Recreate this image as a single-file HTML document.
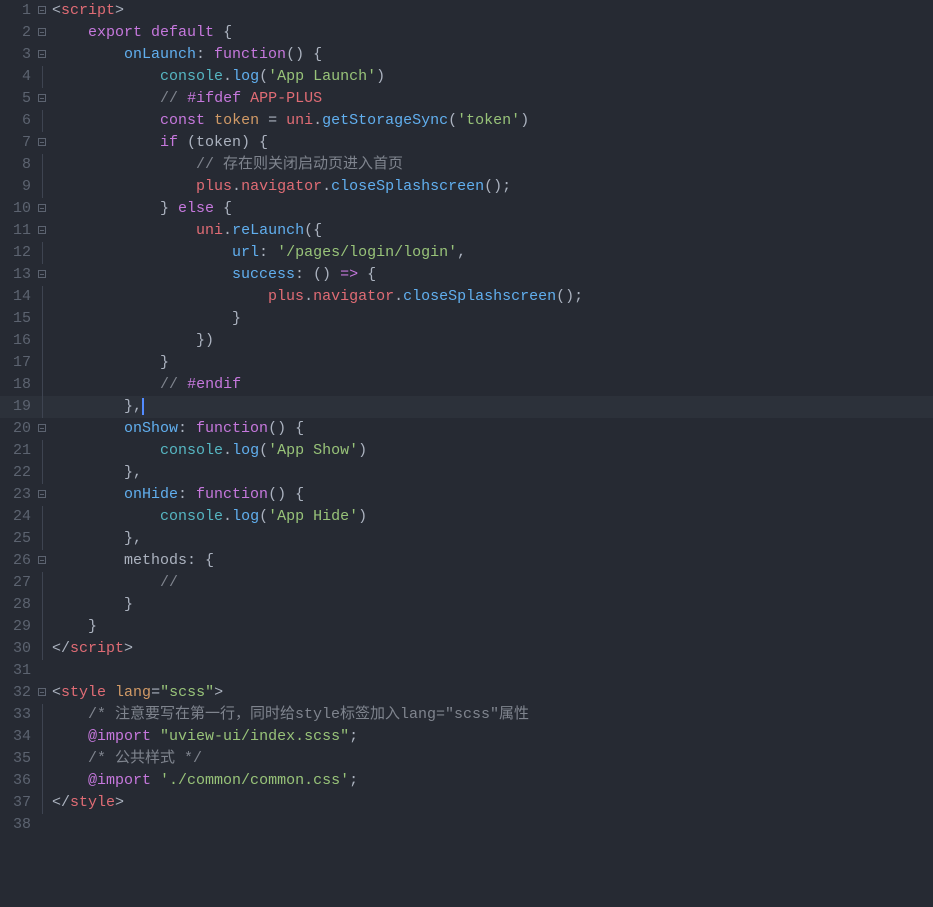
<!DOCTYPE html><html><head><meta charset="utf-8"><style>
body{margin:0;background:#262a33;width:933px;height:907px;overflow:hidden;font-family:"Liberation Mono","Noto Sans CJK SC",monospace;font-size:15px;color:#abb2bf}
.l{position:relative;height:22px;line-height:22px;white-space:pre}
.n{position:absolute;left:0;width:31px;text-align:right;color:#5c6370}
.f{position:absolute;left:38px;top:6px;width:8px;height:8px;border:1px solid #5c6370;box-sizing:border-box}
.f:after{content:"";position:absolute;left:1px;top:3px;width:4px;height:1px;background:#5c6370}
.v{position:absolute;left:42px;top:0;width:1px;height:22px;background:#3e4451}
.c{position:absolute;left:52px}
.cur{background:#2c313a}
.r{color:#e06c75}.p{color:#c678dd}.b{color:#61afef}.y{color:#56b6c2}.g{color:#98c379}.m{color:#7f848e}.o{color:#d19a66}
</style></head><body>
<div class="l"><span class="n">1</span><i class="f"></i><span class="c">&lt;<span class="r">script</span>&gt;</span></div>
<div class="l"><span class="n">2</span><i class="f"></i><span class="c">    <span class="p">export</span> <span class="p">default</span> {</span></div>
<div class="l"><span class="n">3</span><i class="f"></i><span class="c">        <span class="b">onLaunch</span>: <span class="p">function</span>() {</span></div>
<div class="l"><span class="n">4</span><i class="v"></i><span class="c">            <span class="y">console</span>.<span class="b">log</span>(<span class="g">'App Launch'</span>)</span></div>
<div class="l"><span class="n">5</span><i class="f"></i><span class="c">            <span class="m">//</span> <span class="p">#ifdef</span> <span class="r">APP-PLUS</span></span></div>
<div class="l"><span class="n">6</span><i class="v"></i><span class="c">            <span class="p">const</span> <span class="o">token</span> = <span class="r">uni</span>.<span class="b">getStorageSync</span>(<span class="g">'token'</span>)</span></div>
<div class="l"><span class="n">7</span><i class="f"></i><span class="c">            <span class="p">if</span> (token) {</span></div>
<div class="l"><span class="n">8</span><i class="v"></i><span class="c m">                // 存在则关闭启动页进入首页</span></div>
<div class="l"><span class="n">9</span><i class="v"></i><span class="c">                <span class="r">plus</span>.<span class="r">navigator</span>.<span class="b">closeSplashscreen</span>();</span></div>
<div class="l"><span class="n">10</span><i class="f"></i><span class="c">            } <span class="p">else</span> {</span></div>
<div class="l"><span class="n">11</span><i class="f"></i><span class="c">                <span class="r">uni</span>.<span class="b">reLaunch</span>({</span></div>
<div class="l"><span class="n">12</span><i class="v"></i><span class="c">                    <span class="b">url</span>: <span class="g">'/pages/login/login'</span>,</span></div>
<div class="l"><span class="n">13</span><i class="f"></i><span class="c">                    <span class="b">success</span>: () <span class="p">=&gt;</span> {</span></div>
<div class="l"><span class="n">14</span><i class="v"></i><span class="c">                        <span class="r">plus</span>.<span class="r">navigator</span>.<span class="b">closeSplashscreen</span>();</span></div>
<div class="l"><span class="n">15</span><i class="v"></i><span class="c">                    }</span></div>
<div class="l"><span class="n">16</span><i class="v"></i><span class="c">                })</span></div>
<div class="l"><span class="n">17</span><i class="v"></i><span class="c">            }</span></div>
<div class="l"><span class="n">18</span><i class="v"></i><span class="c">            <span class="m">//</span> <span class="p">#endif</span></span></div>
<div class="l cur"><span class="n">19</span><i class="v"></i><span class="c">        },<span style="border-left:2px solid #528bff"> </span></span></div>
<div class="l"><span class="n">20</span><i class="f"></i><span class="c">        <span class="b">onShow</span>: <span class="p">function</span>() {</span></div>
<div class="l"><span class="n">21</span><i class="v"></i><span class="c">            <span class="y">console</span>.<span class="b">log</span>(<span class="g">'App Show'</span>)</span></div>
<div class="l"><span class="n">22</span><i class="v"></i><span class="c">        },</span></div>
<div class="l"><span class="n">23</span><i class="f"></i><span class="c">        <span class="b">onHide</span>: <span class="p">function</span>() {</span></div>
<div class="l"><span class="n">24</span><i class="v"></i><span class="c">            <span class="y">console</span>.<span class="b">log</span>(<span class="g">'App Hide'</span>)</span></div>
<div class="l"><span class="n">25</span><i class="v"></i><span class="c">        },</span></div>
<div class="l"><span class="n">26</span><i class="f"></i><span class="c">        methods: {</span></div>
<div class="l"><span class="n">27</span><i class="v"></i><span class="c m">            //</span></div>
<div class="l"><span class="n">28</span><i class="v"></i><span class="c">        }</span></div>
<div class="l"><span class="n">29</span><i class="v"></i><span class="c">    }</span></div>
<div class="l"><span class="n">30</span><i class="v"></i><span class="c">&lt;/<span class="r">script</span>&gt;</span></div>
<div class="l"><span class="n">31</span><span class="c"></span></div>
<div class="l"><span class="n">32</span><i class="f"></i><span class="c">&lt;<span class="r">style</span> <span class="o">lang</span>=<span class="g">"scss"</span>&gt;</span></div>
<div class="l"><span class="n">33</span><i class="v"></i><span class="c m">    /* 注意要写在第一行，同时给style标签加入lang="scss"属性</span></div>
<div class="l"><span class="n">34</span><i class="v"></i><span class="c">    <span class="p">@import</span> <span class="g">"uview-ui/index.scss"</span>;</span></div>
<div class="l"><span class="n">35</span><i class="v"></i><span class="c m">    /* 公共样式 */</span></div>
<div class="l"><span class="n">36</span><i class="v"></i><span class="c">    <span class="p">@import</span> <span class="g">'./common/common.css'</span>;</span></div>
<div class="l"><span class="n">37</span><i class="v"></i><span class="c">&lt;/<span class="r">style</span>&gt;</span></div>
<div class="l"><span class="n">38</span><span class="c"></span></div>
</body></html>
